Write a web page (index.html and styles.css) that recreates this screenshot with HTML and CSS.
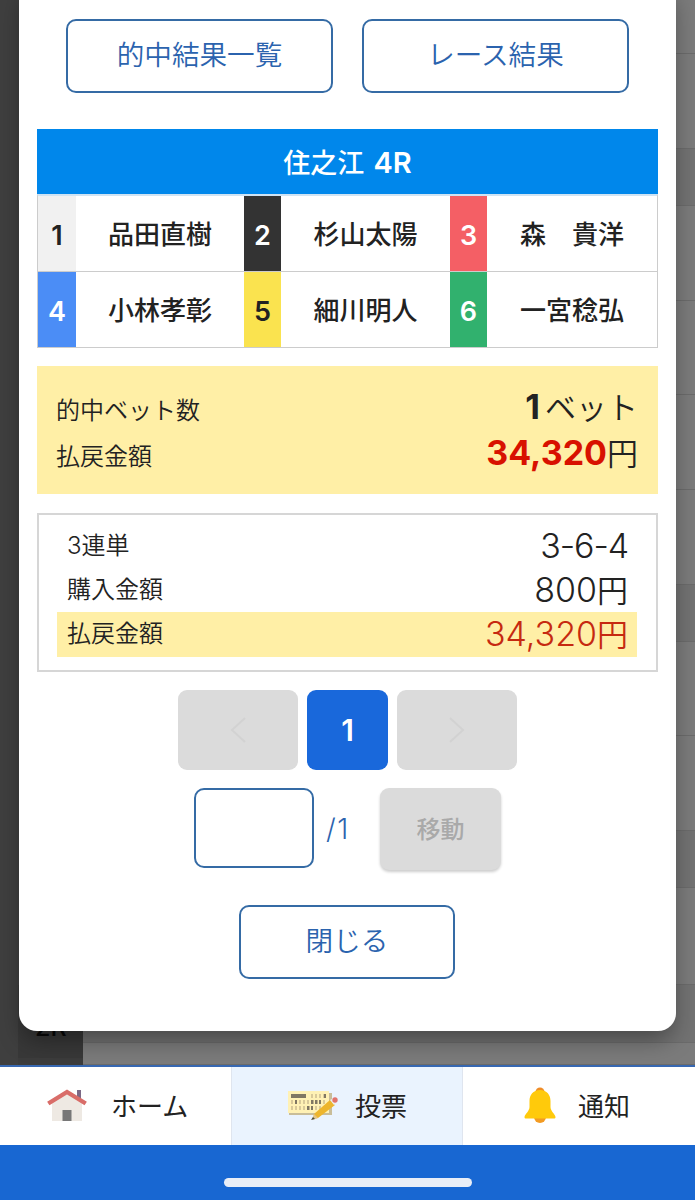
FILE: index.html
```html
<!DOCTYPE html>
<html lang="ja">
<head>
<meta charset="utf-8">
<title>的中結果</title>
<link rel="stylesheet" href="styles.css">
</head>
<body>
<div class="screen">
  <div class="backdrop">
    <div class="side"><div class="side-cell">2R</div></div>
    <div class="rows">
      <div class="row" style="height:54px"></div>
      <div class="row" style="height:95px"></div>
      <div class="row dark" style="height:57px"></div>
      <div class="row" style="height:95px"></div>
      <div class="row" style="height:94px"></div>
      <div class="row" style="height:95px"></div>
      <div class="row" style="height:95px"></div>
      <div class="row dark" style="height:57px"></div>
      <div class="row" style="height:94px"></div>
      <div class="row" style="height:95px"></div>
      <div class="row dark" style="height:57px"></div>
      <div class="row" style="height:97px"></div>
      <div class="row dark" style="height:58px"></div>
      <div class="row" style="height:22px"></div>
    </div>
  </div>

  <main class="modal">
    <div class="links">
      <button class="outline">的中結果一覧</button>
      <button class="outline">レース結果</button>
    </div>

    <h1 class="race">住之江 <span class="num">4R</span></h1>
    <div class="racers">
      <div class="no n1">1</div><div class="name">品田直樹</div>
      <div class="no n2">2</div><div class="name">杉山太陽</div>
      <div class="no n3">3</div><div class="name">森　貴洋</div>
      <div class="no n4">4</div><div class="name">小林孝彰</div>
      <div class="no n5">5</div><div class="name">細川明人</div>
      <div class="no n6">6</div><div class="name">一宮稔弘</div>
    </div>

    <section class="summary">
      <div class="line"><span class="label">的中ベット数</span><span class="value"><b class="num count">1</b>ベット</span></div>
      <div class="line"><span class="label">払戻金額</span><span class="value"><b class="num red">34,320</b>円</span></div>
    </section>

    <section class="ticket">
      <div class="line"><span class="label"><span class="num">3</span>連単</span><span class="value"><span class="num combo">3-6-4</span></span></div>
      <div class="line"><span class="label">購入金額</span><span class="value"><span class="num">800</span>円</span></div>
      <div class="line hit"><span class="label">払戻金額</span><span class="value"><span class="num">34,320</span>円</span></div>
    </section>

    <nav class="pager">
      <button class="page"><svg width="16" height="26" viewBox="0 0 16 26"><path d="M15 1 2 13l13 12"/></svg></button>
      <button class="page current">1</button>
      <button class="page"><svg width="16" height="26" viewBox="0 0 16 26"><path d="m1 1 13 12L1 25"/></svg></button>
    </nav>
    <div class="jump">
      <input class="jump-input" type="text" aria-label="ページ">
      <span class="total">/1</span>
      <button class="go">移動</button>
    </div>
    <button class="outline close">閉じる</button>
  </main>

  <footer class="tabs">
    <a class="tab home">
      <svg class="icon" width="40" height="34" viewBox="0 0 40 34">
        <path fill="#7b6986" d="M30 2h4v12h-4z"/>
        <path fill="#eee9e3" d="M5 14 20 4l15 10v19H5z"/>
        <path fill="none" stroke="#d96d69" stroke-width="4.4" d="M1.3 15.5 20 4l18.700 11.500"/>
        <path fill="#777" d="M15.500 22h9v11h-9z"/>
      </svg><span>ホーム</span>
    </a>
    <a class="tab vote">
      <svg class="icon" width="52" height="34" viewBox="0 0 52 34">
        <path fill="#c9bd99" d="M2 5h43v22H2z"/>
        <path fill="#fff1b5" d="M1 3h41v22H1z"/>
        <path fill="#807763" d="M4 6h15v4H4z"/>
        <g fill="none" stroke-width="4">
          <path stroke="#d9c999" stroke-dasharray="2 2" d="M24 8h16M4 14h36M4 20h36"/>
          <path stroke="#807763" stroke-dasharray="2.500 1.500" d="M37 8h2M8 14h2M24 14h10M20 20h6"/>
        </g>
        <path fill="#edb52d" d="m27 26 16-14 5 5-17 13-5 1z"/>
        <path fill="#e3c486" d="m27 26 4 4-6 2z"/>
        <path fill="#4b4b40" d="m26 29 2 2-4 1z"/>
        <path fill="#eee" d="m43 12 2-1 4 4-2 2z"/>
        <circle cx="48" cy="12" r="2.700" fill="#e1736c"/>
      </svg><span>投票</span>
    </a>
    <a class="tab notice">
      <svg class="icon" width="32" height="36" viewBox="0 0 32 36">
        <circle cx="16" cy="5" r="4.500" fill="#ef8d27"/>
        <circle cx="16" cy="30" r="6" fill="#f39b22"/>
        <path fill="#ffca0b" d="M16 3C9 3 5.500 8 5.500 14v6c0 4-4.500 7-5 10 0 1 .5 1.500 1.500 1.500h28c1 0 1.500-.5 1.500-1.500-.5-3-5-6-5-10v-6C26.500 8 23 3 16 3z"/>
      </svg><span>通知</span>
    </a>
  </footer>
  <div class="home-area"><div class="home-indicator"></div></div>
</div>
</body>
</html>
```

FILE: styles.css
```css
* { box-sizing: border-box; }
body { margin: 0; font-family: "Noto Sans CJK JP", sans-serif; color: #222; }
button, input { margin: 0; padding: 0; font: inherit; }
.screen { position: relative; width: 695px; height: 1200px; overflow: hidden; display: flex; flex-direction: column; }

.backdrop { height: 1065px; flex: none; display: flex; overflow: hidden; background: #7b7b7b; }
.side { width: 83px; background: #3f3f3f; display: flex; flex-direction: column; justify-content: flex-end; padding-left: 18px; }
.side-cell { height: 80px; background: #383838; border-bottom: 7px solid #3c3c3c; padding-left: 17px; font: 500 25px/85px Inter, sans-serif; color: #080808; }
.rows { flex: 1; }
.row { border-bottom: 1px solid #6b6b6b; }
.row.dark { background: #727272; }

.modal {
  position: absolute; left: 19px; top: -20px; width: 657px; height: 1051px;
  padding: 39px 18px 0; background: #fff; border-radius: 18px;
  box-shadow: 0 12px 24px -4px rgba(0, 0, 0, .4);
  display: flex; flex-direction: column;
}
.num { font-family: Inter, sans-serif; }
.outline {
  height: 74px; padding-bottom: 5px; border: 2px solid #356ba5; border-radius: 10px; background: #fff;
  color: #2b63ae; font-size: 27.6px; font-weight: 350; line-height: 65px;
}
.links { display: grid; grid-template-columns: 267px 267px; gap: 29px; justify-content: center; }

.race { height: 65px; margin: 36px 0 0; background: #0087eb; color: #fff; font-size: 27px; line-height: 65px; font-weight: 500; text-align: center; }
.race .num { margin-left: 3px; font-weight: 600; font-size: 29px; }
.racers {
  height: 154px; border: 1px solid #ccc; border-width: 2px 1px 1px;
  border-top-color: #cfe3f3; display: grid; grid-template-columns: 38px 168px 37px 169px 37px 170px;
  grid-template-rows: 75px 75px; row-gap: 1px; background: #ccc;
}
.no { display: flex; align-items: center; justify-content: center; padding-top: 3px; font: 600 27px/1 Inter, sans-serif; color: #fff; }
.name { background: #fff; font-size: 26px; line-height: 73px; font-weight: 500; text-align: center; }
.n1 { background: #f1f1f1; color: #222; }
.n2 { background: #333; }
.n3 { background: #f45f65; }
.n4 { background: #4b8df6; }
.n5 { background: #fae34f; color: #222; }
.n6 { background: #31b16e; }

.line { display: flex; justify-content: space-between; }
.label { font-size: 24px; font-weight: 350; }
.value { font-size: 31px; font-weight: 350; }
.summary { height: 128px; margin-top: 18px; padding: 17px 20px 0 19px; background: #ffefa6; }
.summary .line { height: 46px; line-height: 46px; }
.summary .label { line-height: 51px; }
.summary b { font-size: 34px; font-weight: 700; }
.summary .count { margin-right: 5px; }
.red { color: #d81100; }
.ticket { height: 159px; margin-top: 19px; padding: 9px 19px 0 18px; border: 2px solid #d6d6d6; }
.ticket .line { height: 44px; line-height: 42px; padding: 0 9px 0 10px; }
.ticket .label { line-height: 40px; }
.ticket .value .num { font-size: 34px; font-weight: 300; }
.ticket .value .combo { letter-spacing: -1.100px; }
.ticket .hit { height: 45px; background: #ffefa6; }
.hit .value { color: #c62910; }

.pager { display: flex; justify-content: center; gap: 9px; margin-top: 18px; }
.page { width: 120px; height: 80px; border: 0; border-radius: 9px; background: #dbdbdb; display: flex; align-items: center; justify-content: center; }
.page svg { fill: none; stroke: #d2d2d2; stroke-width: 2; }
.page.current { width: 81px; background: #1968db; color: #fff; font: 600 30px/1 Inter, sans-serif; }
.jump { display: flex; align-items: center; margin: 18px 0 0 157px; height: 82px; }
.jump-input { width: 120px; height: 80px; align-self: flex-start; border: 2px solid #356ba5; border-radius: 10px; background: #fff; }
.total { width: 66px; padding-left: 12px; font: 300 28px/1 Inter, sans-serif; letter-spacing: 1.500px; color: #2b63ae; }
.go { width: 121px; height: 82px; padding-bottom: 4px; border: 0; border-radius: 9px; background: #dbdbdb; box-shadow: 0 2px 3px rgba(0, 0, 0, .2); color: #a9a9a9; font-size: 24px; font-weight: 500; }
.close { width: 216px; margin: 35px 0 0 202px; }

.tabs { height: 80px; border-top: 2px solid #3768b2; display: grid; grid-template-columns: 231px 232px 232px; background: #fff; }
.tab { display: flex; align-items: center; font-size: 26px; font-weight: 400; }
.tab span { padding-bottom: 4px; }
.home { padding-left: 47px; gap: 24px; }
.vote { padding-left: 55px; gap: 16px; background: #eaf3fe; border: solid #dfe5ef; border-width: 0 1px; }
.notice { padding-left: 61px; gap: 22px; }
.icon { display: block; flex: none; position: relative; top: -1px; }
.home-area { height: 55px; background: #1867d2; display: flex; justify-content: center; padding-top: 33px; }
.home-indicator { width: 248px; height: 9px; border-radius: 5px; background: #e9eef7; }
```
